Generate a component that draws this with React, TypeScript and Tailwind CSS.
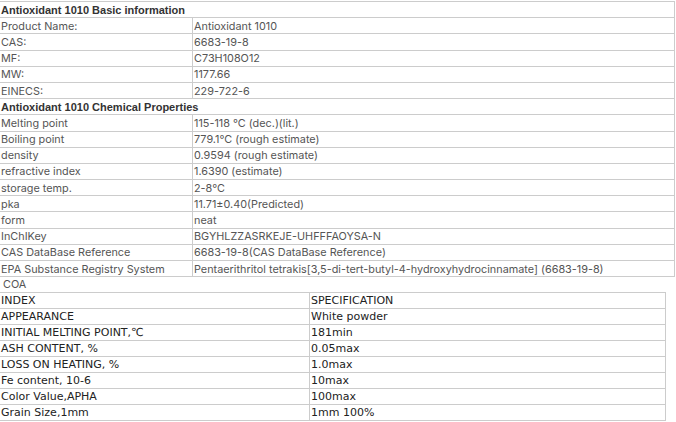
import React from 'react';

const basic: [string, string][] = [
  ['Product Name:', 'Antioxidant 1010'],
  ['CAS:', '6683-19-8'],
  ['MF:', 'C73H108O12'],
  ['MW:', '1177.66'],
  ['EINECS:', '229-722-6'],
];

const props: [string, string][] = [
  ['Melting point', '115-118 °C (dec.)(lit.)'],
  ['Boiling point', '779.1°C (rough estimate)'],
  ['density', '0.9594 (rough estimate)'],
  ['refractive index', '1.6390 (estimate)'],
  ['storage temp.', '2-8°C'],
  ['pka', '11.71±0.40(Predicted)'],
  ['form', 'neat'],
  ['InChIKey', 'BGYHLZZASRKEJE-UHFFFAOYSA-N'],
  ['CAS DataBase Reference', '6683-19-8(CAS DataBase Reference)'],
  [
    'EPA Substance Registry System',
    'Pentaerithritol tetrakis[3,5-di-tert-butyl-4-hydroxyhydrocinnamate] (6683-19-8)',
  ],
];

const coa: [string, string][] = [
  ['INDEX', 'SPECIFICATION'],
  ['APPEARANCE', 'White powder'],
  ['INITIAL MELTING POINT,℃', '181min'],
  ['ASH CONTENT, %', '0.05max'],
  ['LOSS ON HEATING, %', '1.0max'],
  ['Fe content, 10-6', '10max'],
  ['Color Value,APHA', '100max'],
  ['Grain Size,1mm', '1mm 100%'],
];

function InfoRow({ label, value }: { label: string; value: string }) {
  return (
    <tr className="h-[16.2px]">
      <td className="w-[193px] border border-[#cccccc] p-0 pl-px leading-[14px] whitespace-nowrap">{label}</td>
      <td className="border border-[#cccccc] p-0 pl-px leading-[14px] whitespace-nowrap">{value}</td>
    </tr>
  );
}

function TitleRow({ children }: { children: React.ReactNode }) {
  return (
    <tr className="h-[16.2px]">
      <td
        colSpan={2}
        className="border border-[#cccccc] p-0 pl-px text-[11px] leading-[14px] font-bold text-[#333333]"
        style={{ fontFamily: '"Liberation Sans", Arial, sans-serif' }}
      >
        {children}
      </td>
    </tr>
  );
}

export default function App() {
  return (
    <div className="w-[676px] h-[422px] overflow-hidden bg-white">
      <table
        className="-ml-px mt-px w-[676px] border-collapse text-[10.85px] text-[#555555]"
        style={{ fontFamily: 'Inter, "Liberation Sans", sans-serif' }}
      >
        <tbody>
          <TitleRow>Antioxidant 1010 Basic information</TitleRow>
          {basic.map(([k, v]) => (
            <InfoRow key={k} label={k} value={v} />
          ))}
          <TitleRow>Antioxidant 1010 Chemical Properties</TitleRow>
          {props.map(([k, v]) => (
            <InfoRow key={k} label={k} value={v} />
          ))}
        </tbody>
      </table>
      <div
        className="h-[15px] pl-[3px] text-[10.85px] leading-[15px] text-[#555555]"
        style={{ fontFamily: 'Inter, "Liberation Sans", sans-serif' }}
      >
        COA
      </div>
      <table
        className="-ml-px w-[667px] border-collapse text-[11px] text-[#222222]"
        style={{ fontFamily: '"DejaVu Sans", Verdana, sans-serif' }}
      >
        <tbody>
          {coa.map(([k, v]) => (
            <tr key={k} className="h-4">
              <td className="w-[310px] border border-[#cccccc] p-0 pl-px leading-[14px] whitespace-nowrap">{k}</td>
              <td className="border border-[#cccccc] p-0 pl-px leading-[14px] whitespace-nowrap">{v}</td>
            </tr>
          ))}
        </tbody>
      </table>
    </div>
  );
}
